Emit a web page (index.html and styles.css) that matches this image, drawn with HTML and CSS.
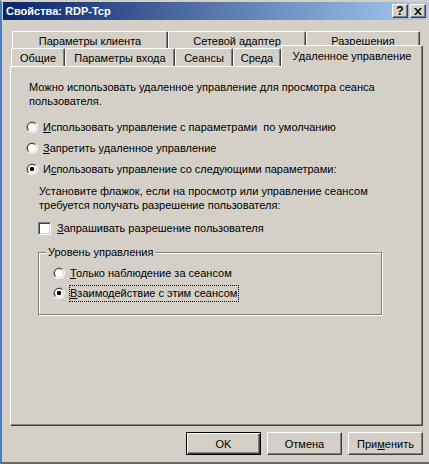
FILE: index.html
```html
<!DOCTYPE html>
<html lang="ru">
<head>
<meta charset="utf-8">
<title>Свойства: RDP-Tcp</title>
<link rel="stylesheet" href="styles.css">
</head>
<body>
<div class="window">
  <div class="titlebar">
    <span class="title">Свойства: RDP-Tcp</span>
    <span class="cbtn help">?</span>
    <span class="cbtn close"><svg width="8" height="7" viewBox="0 0 8 7"><path d="M0 0h2l2 2.4L6 0h2L5 3.5 8 7H6L4 4.6 2 7H0l3-3.5z" fill="#000"/></svg></span>
  </div>

  <div class="tabs">
    <div class="tabrow back">
      <div class="tab t-client">Параметры клиента</div>
      <div class="tab t-net">Сетевой адаптер</div>
      <div class="tab t-perm">Разрешения</div>
    </div>
    <div class="tabrow front">
      <div class="tab t-general">Общие</div>
      <div class="tab t-logon">Параметры входа</div>
      <div class="tab t-sessions">Сеансы</div>
      <div class="tab t-env">Среда</div>
      <div class="tab t-remote sel">Удаленное управление</div>
    </div>
  </div>

  <div class="panel">
    <p class="intro">Можно использовать удаленное управление для просмотра сеанса<br>пользователя.</p>
    <div class="options">
      <div class="radio">
        <svg class="rb" width="12" height="12" viewBox="0 0 12 12"><circle cx="6" cy="6" r="6" fill="#fff"/><path d="M1.76 10.24A6 6 0 0 1 10.24 1.76L6 6z" fill="#808080"/><circle cx="6" cy="6" r="5" fill="#D4D0C8"/><path d="M2.46 9.54A5 5 0 0 1 9.54 2.46L6 6z" fill="#404040"/><circle cx="6" cy="6" r="4" fill="#fff"/></svg>
        <span><u>И</u>спользовать управление с параметрами&nbsp; по умолчанию</span>
      </div>
      <div class="radio">
        <svg class="rb" width="12" height="12" viewBox="0 0 12 12"><circle cx="6" cy="6" r="6" fill="#fff"/><path d="M1.76 10.24A6 6 0 0 1 10.24 1.76L6 6z" fill="#808080"/><circle cx="6" cy="6" r="5" fill="#D4D0C8"/><path d="M2.46 9.54A5 5 0 0 1 9.54 2.46L6 6z" fill="#404040"/><circle cx="6" cy="6" r="4" fill="#fff"/></svg>
        <span><u>З</u>апретить удаленное управление</span>
      </div>
      <div class="radio">
        <svg class="rb" width="12" height="12" viewBox="0 0 12 12"><circle cx="6" cy="6" r="6" fill="#fff"/><path d="M1.76 10.24A6 6 0 0 1 10.24 1.76L6 6z" fill="#808080"/><circle cx="6" cy="6" r="5" fill="#D4D0C8"/><path d="M2.46 9.54A5 5 0 0 1 9.54 2.46L6 6z" fill="#404040"/><circle cx="6" cy="6" r="4" fill="#fff"/><rect x="4" y="4" width="4" height="4" rx="1.2" fill="#000"/></svg>
        <span>И<u>с</u>пользовать управление со следующими параметрами:</span>
      </div>
    </div>

    <p class="hint">Установите флажок, если на просмотр или управление сеансом<br>требуется получать разрешение пользователя:</p>

    <div class="check">
      <span class="box"></span>
      <span><u>З</u>апрашивать разрешение пользователя</span>
    </div>

    <div class="group">
      <div class="legend">Уровень управления</div>
      <div class="radio small">
        <svg class="rb" width="12" height="12" viewBox="0 0 12 12"><circle cx="6" cy="6" r="6" fill="#fff"/><path d="M1.76 10.24A6 6 0 0 1 10.24 1.76L6 6z" fill="#808080"/><circle cx="6" cy="6" r="5" fill="#D4D0C8"/><path d="M2.46 9.54A5 5 0 0 1 9.54 2.46L6 6z" fill="#404040"/><circle cx="6" cy="6" r="4" fill="#fff"/></svg>
        <span><u>Т</u>олько наблюдение за сеансом</span>
      </div>
      <div class="radio small focused">
        <svg class="rb" width="12" height="12" viewBox="0 0 12 12"><circle cx="6" cy="6" r="6" fill="#fff"/><path d="M1.76 10.24A6 6 0 0 1 10.24 1.76L6 6z" fill="#808080"/><circle cx="6" cy="6" r="5" fill="#D4D0C8"/><path d="M2.46 9.54A5 5 0 0 1 9.54 2.46L6 6z" fill="#404040"/><circle cx="6" cy="6" r="4" fill="#fff"/><rect x="4" y="4" width="4" height="4" rx="1.2" fill="#000"/></svg>
        <span class="focus"><u>В</u>заимодействие с этим сеансом</span>
      </div>
    </div>
  </div>

  <div class="buttons">
    <button class="btn default">OK</button>
    <button class="btn">Отмена</button>
    <button class="btn">При<u>м</u>енить</button>
  </div>
</div>
</body>
</html>
```

FILE: styles.css
```css
html, body {
  margin: 0;
  padding: 0;
  background: #D4D0C8;
}

body {
  font-family: "Liberation Sans", Arial, sans-serif;
  font-size: 11px;
  color: #000;
}

.window {
  width: 429px;
  height: 464px;
  box-sizing: border-box;
  border-left: 2px solid #4A7CC4;
  border-top: 2px solid #D4D0C8;
  border-bottom: 2px solid #6A6A6A;
  display: flex;
  flex-direction: column;
  background: #D4D0C8;
}

/* Title bar */
.titlebar {
  height: 18px;
  margin: 0 1px 0 1px;
  background: linear-gradient(to right, #0A246A, #A6CAF0);
  display: flex;
  align-items: center;
  padding-left: 3px;
}

.title {
  flex: 1;
  color: #fff;
  font-weight: bold;
  font-size: 11px;
  line-height: 18px;
  white-space: nowrap;
}

.cbtn {
  width: 16px;
  height: 14px;
  box-sizing: border-box;
  background: #D4D0C8;
  border: 1px solid;
  border-color: #fff #404040 #404040 #fff;
  box-shadow: inset -1px -1px 0 #808080;
  display: flex;
  align-items: center;
  justify-content: center;
  margin-right: 2px;
}

.help {
  font-weight: bold;
  font-size: 12px;
  line-height: 12px;
}

.close svg {
  display: block;
}

/* Tabs */
.tabs {
  margin-top: 11px;
}

.tabrow {
  display: flex;
}

.tabrow.back {
  margin-left: 10px;
  height: 17px;
}

.tabrow.front {
  margin-left: 9px;
  height: 18px;
}

.tab {
  box-sizing: border-box;
  border-top: 1px solid #fff;
  border-left: 1px solid #fff;
  border-right: 1px solid #404040;
  box-shadow: inset -1px 0 0 #808080;
  border-radius: 2px 2px 0 0;
  display: flex;
  align-items: center;
  justify-content: center;
  white-space: nowrap;
  background: #D4D0C8;
}

.tabrow.back .tab {
  padding-top: 2px;
}

.t-client { width: 156px; }
.t-net { width: 138px; }
.t-perm { width: 114px; }

.t-general { width: 54px; }
.t-logon { width: 110px; }
.t-sessions { width: 58px; }
.t-env { width: 48px; }

.t-remote {
  width: 142px;
}

.tab.sel {
  align-self: flex-start;
  height: 22px;
  margin-top: -3px;
  position: relative;
  z-index: 1;
  padding-bottom: 2px;
}

/* Panel */
.panel {
  margin-left: 8px;
  width: 413px;
  height: 360px;
  box-sizing: border-box;
  border: 1px solid;
  border-color: #fff #404040 #404040 #fff;
  box-shadow: inset -1px -1px 0 #808080;
  padding: 13px 0 0 15px;
}

.intro {
  margin: 0 0 0 3px;
  line-height: 14px;
}

.options {
  margin-top: 8px;
}

.radio {
  height: 21px;
  display: flex;
  align-items: center;
  gap: 5px;
  white-space: nowrap;
}

.rb {
  display: block;
  flex: none;
}

.hint {
  margin: 5px 0 0 13px;
  line-height: 14px;
}

.check {
  margin: 9px 0 0 12px;
  height: 14px;
  display: flex;
  align-items: center;
  gap: 6px;
}

.box {
  width: 13px;
  height: 13px;
  box-sizing: border-box;
  background: #fff;
  border: 1px solid;
  border-color: #808080 #fff #fff #808080;
  box-shadow: inset 1px 1px 0 #404040, inset -1px -1px 0 #D4D0C8;
}

/* Group box */
.group {
  margin: 17px 0 0 12px;
  width: 344px;
  height: 63px;
  box-sizing: border-box;
  border: 1px solid #808080;
  box-shadow: inset 1px 1px 0 #fff, 1px 1px 0 #fff;
}

.legend {
  width: fit-content;
  margin: -8px 0 0 7px;
  padding: 0 2px;
  line-height: 14px;
  background: #D4D0C8;
}

.group .legend + .radio {
  margin-top: 4px;
}

.radio.small {
  height: 20px;
  margin-left: 14px;
}

.radio.focused {
  gap: 5px;
}

.focus {
  display: inline-block;
  line-height: 14px;
  padding: 0 1px 1px 0;
  outline: 1px dotted #000;
  outline-offset: 0;
}

/* Buttons */
.buttons {
  margin-top: 6px;
  display: flex;
  justify-content: flex-end;
  gap: 6px;
  padding-right: 6px;
}

.btn {
  width: 75px;
  height: 23px;
  box-sizing: border-box;
  padding: 0;
  margin: 0;
  font-family: "Liberation Sans", Arial, sans-serif;
  font-size: 11px;
  color: #000;
  background: #D4D0C8;
  border: 1px solid;
  border-color: #fff #404040 #404040 #fff;
  box-shadow: inset -1px -1px 0 #808080;
}

.btn.default {
  border-color: #000;
  box-shadow: inset 1px 1px 0 #fff, inset -1px -1px 0 #404040, inset -2px -2px 0 #808080;
}
```
